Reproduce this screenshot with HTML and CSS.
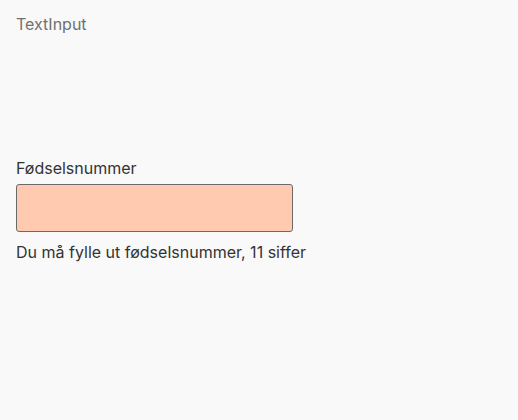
FILE: index.html
```html
<!DOCTYPE html>
<html lang="no">
<head>
<meta charset="utf-8">
<link rel="stylesheet" href="styles.css">
</head>
<body>
<div class="page">
  <div class="title">TextInput</div>
  <div class="field">
    <label class="label" for="fnr">Fødselsnummer</label>
    <input class="input" id="fnr" type="text">
    <div class="error">Du må fylle ut fødselsnummer, 11 siffer</div>
  </div>
</div>
</body>
</html>
```
FILE: styles.css
```css
html, body {
  margin: 0;
  background: #f9f9f9;
}
.page {
  padding: 14px 16px;
  font-family: Inter, "Liberation Sans", sans-serif;
  font-size: 16px;
}
.title {
  color: #707070;
  line-height: 20px;
}
.field {
  margin-top: 124px;
  display: flex;
  flex-direction: column;
  align-items: flex-start;
}
.label {
  color: #333333;
  line-height: 20px;
  margin-bottom: 6px;
}
.input {
  box-sizing: border-box;
  width: 277px;
  height: 48px;
  margin: 0;
  background: #ffcab0;
  border: 1px solid #6a6a6a;
  border-radius: 3px;
}
.error {
  color: #333333;
  line-height: 20px;
  margin-top: 10px;
}
```
